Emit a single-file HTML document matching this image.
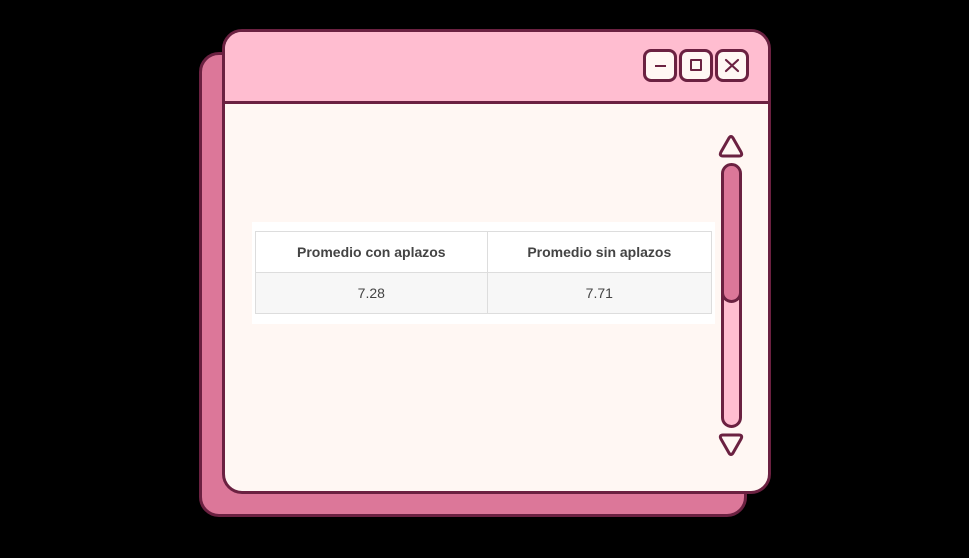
<!DOCTYPE html>
<html><head><style>
*{margin:0;padding:0;box-sizing:border-box}
body{width:969px;height:558px;background:#000;position:relative;overflow:hidden;font-family:"Liberation Sans",Arial,sans-serif}
.back{position:absolute;left:199px;top:52px;width:548px;height:465px;background:#dc7799;border:3px solid #6b2141;border-radius:20px}
.front{position:absolute;left:222px;top:29px;width:549px;height:465px;background:#fff7f3;border:3px solid #6b2141;border-radius:20px;overflow:hidden}
.title{position:absolute;left:0;top:0;right:0;height:72px;background:#ffbdd0;border-bottom:3px solid #6b2141}
.btn{position:absolute;top:17px;width:34px;height:33px;background:#fff7f3;border:3px solid #6b2141;border-radius:8px}
.panel{position:absolute;left:27px;top:190px;width:463px;height:102px;background:#fff}
table{position:absolute;left:3px;top:9px;border-collapse:collapse;width:457px;font-size:14px;color:#333}
td{border:1px solid #ddd;text-align:center;height:41px}
th{border:1px solid #ddd;height:41px;font-weight:bold;color:#444}
tr.r td{background:#f7f7f7;color:#444}
.track{position:absolute;left:496px;top:131px;width:21px;height:265px;background:#ffbdd0;border:3px solid #6b2141;border-radius:11px;overflow:hidden}
.thumb{position:absolute;left:-3px;top:-3px;width:21px;height:140px;background:#dc7799;border:3px solid #6b2141;border-radius:11px}
</style></head><body>
<div class="back"></div>
<div class="front">
 <div class="title">
  <div class="btn" style="left:418px"><div style="position:absolute;left:9px;top:13px;width:11px;height:2px;background:#6b2141"></div></div>
  <div class="btn" style="left:454px"><div style="position:absolute;left:8px;top:7px;width:12px;height:12px;border:2px solid #6b2141;border-radius:1px"></div></div>
  <div class="btn" style="left:490px"><svg width="28" height="27" style="position:absolute;left:0;top:0"><path d="M8 8L20 19M20 8L8 19" stroke="#6b2141" stroke-width="2.2" stroke-linecap="round"/></svg></div>
 </div>
 <div class="panel">
  <table>
   <tr><th>Promedio con aplazos</th><th>Promedio sin aplazos</th></tr>
   <tr class="r"><td>7.28</td><td>7.71</td></tr>
  </table>
 </div>
 <svg style="position:absolute;left:490px;top:101px" width="32" height="28"><path d="M14 5 Q16 2 18 5 L26 19 Q28 23 24 23 L8 23 Q4 23 6 19 Z" fill="#fff7f3" stroke="#6b2141" stroke-width="3" stroke-linejoin="round"/></svg>
 <div class="track"><div class="thumb"></div></div>
 <svg style="position:absolute;left:490px;top:398px" width="32" height="28"><path d="M14 23 Q16 26 18 23 L26 9 Q28 5 24 5 L8 5 Q4 5 6 9 Z" fill="#fff7f3" stroke="#6b2141" stroke-width="3" stroke-linejoin="round"/></svg>
</div>
</body></html>
